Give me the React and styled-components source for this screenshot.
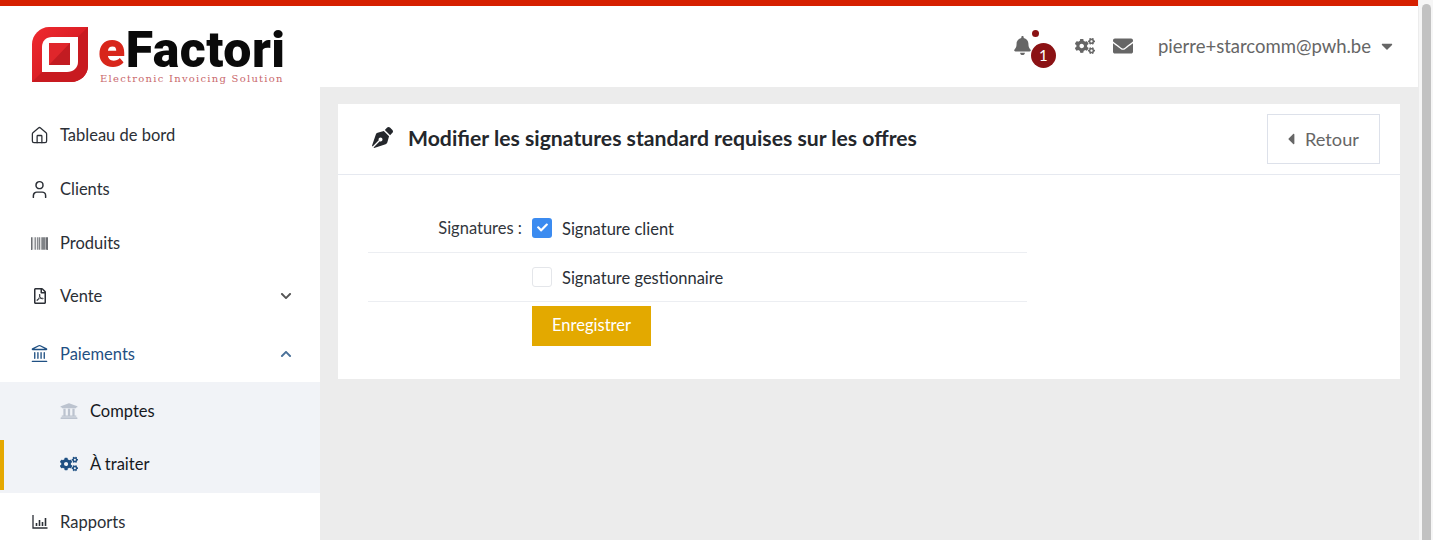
import React from 'react';
import styled, { createGlobalStyle } from 'styled-components';
import { FaBell, FaCogs, FaEnvelope, FaCaretDown, FaCaretLeft, FaPenNib, FaBarcode, FaRegFilePdf, FaUniversity, FaChevronDown, FaChevronUp, FaCheck } from 'react-icons/fa';
import { Home, User, Landmark } from 'lucide-react';

const GlobalStyle = createGlobalStyle`
  html, body {
    margin: 0;
    height: 100%;
    overflow: hidden;
    font-family: Lato, "Open Sans", sans-serif;
    color: #2b2f36;
  }
`;

const Shell = styled.div`
  display: flex;
  height: 540px;
  overflow: hidden;
`;

const Page = styled.div`
  flex: 1;
  display: flex;
  flex-direction: column;
  min-width: 0;
`;

const ScrollTrack = styled.div`
  width: 15px;
  box-sizing: border-box;
  padding: 4px 2px 0 3px;
  background: #f6f6f6;
  border-left: 1px solid #ececec;
`;

const ScrollThumb = styled.div`
  height: 536px;
  border-radius: 5px 5px 0 0;
  background: #c2c2c2;
`;

const Stripe = styled.div`
  height: 6px;
  background: #d62000;
`;

const Header = styled.header`
  height: 81px;
  display: flex;
  align-items: center;
  justify-content: space-between;
  padding: 0 22px 0 32px;
  background: #fff;
`;

const Logo = styled.div`
  display: flex;
  align-items: flex-start;
  gap: 10px;
  margin-top: 19px;
`;

const LogoText = styled.div`
  display: flex;
  flex-direction: column;
  width: 186px;
`;

const Wordmark = styled.div`
  font-family: Roboto, sans-serif;
  font-weight: 900;
  font-size: 50px;
  line-height: 46px;
  letter-spacing: 0.5px;
  color: #0a0a0a;
  white-space: nowrap;

  span {
    color: #d8261b;
  }
`;

const Tagline = styled.div`
  font-family: "DejaVu Serif", serif;
  font-size: 10px;
  line-height: 12px;
  letter-spacing: 1.25px;
  margin-left: 2px;
  color: #c9686c;
  white-space: nowrap;
`;

const Tools = styled.div`
  display: flex;
  align-items: center;
  color: #666;
  margin-top: -2px;
`;

const BellWrap = styled.div`
  position: relative;
  display: flex;
  font-size: 19px;
  margin-right: 43px;
`;

const Dot = styled.span`
  position: absolute;
  top: -6px;
  left: 19px;
  width: 7px;
  height: 7px;
  border-radius: 50%;
  background: #8b1214;
`;

const Count = styled.span`
  position: absolute;
  top: 7px;
  left: 18px;
  width: 25px;
  height: 25px;
  border-radius: 50%;
  background: #8b1214;
  color: #fff;
  font-size: 15px;
  line-height: 25px;
  text-align: center;
`;

const ToolIcon = styled.span`
  display: flex;
  font-size: 20px;
  margin-right: 18px;
`;

const UserName = styled.span`
  font-size: 18.5px;
  margin-left: 7px;
  color: #666;
`;

const Caret = styled.span`
  display: flex;
  font-size: 18px;
  margin-left: 7px;
`;

const Body = styled.div`
  flex: 1;
  display: flex;
  min-height: 0;
`;

const Sidebar = styled.nav`
  width: 320px;
  flex-shrink: 0;
  padding-top: 21px;
  background: #fff;
`;

const NavRow = styled.div`
  display: flex;
  align-items: center;
  box-sizing: border-box;
  height: ${p => p.$height || 54}px;
  padding: ${p => p.$pushDown || 0}px 28px 0 31px;
  font-size: 16.5px;
  color: ${p => (p.$open ? '#1f5083' : '#2b2f36')};
`;

const NavIcon = styled.span`
  width: 17px;
  margin-right: 12px;
  display: flex;
  justify-content: center;
  font-size: 17px;

  svg {
    flex-shrink: 0;
  }
`;

const NavLabel = styled.span`
  flex: 1;
`;

const Chevron = styled.span`
  display: flex;
  font-size: 12px;
  color: ${p => (p.$open ? '#4a7199' : '#555')};
`;

const SubMenu = styled.div`
  display: flex;
  flex-direction: column;
  gap: 5px;
  background: #f1f3f7;
  padding: 3px 0;
`;

const SubRow = styled.div`
  display: flex;
  align-items: center;
  box-sizing: border-box;
  height: 50px;
  padding-left: ${p => (p.$active ? 56 : 60)}px;
  padding-top: ${p => (p.$active ? 0 : 1)}px;
  padding-bottom: ${p => (p.$active ? 2 : 0)}px;
  border-left: ${p => (p.$active ? '4px solid #e5a800' : 'none')};
  font-size: 16.5px;
  color: #16191e;
`;

const SubIcon = styled.span`
  width: 18px;
  margin-right: 12px;
  display: flex;
  justify-content: center;
  font-size: 18px;
  color: ${p => p.$color};
`;

const Main = styled.main`
  flex: 1;
  min-width: 0;
  padding: 17px 18px;
  background: #ececec;
`;

const Card = styled.section`
  background: #fff;
  height: 275px;
`;

const CardHeader = styled.div`
  height: 71px;
  box-sizing: border-box;
  display: flex;
  align-items: center;
  padding: 0 20px 0 34px;
  border-bottom: 1px solid #e6e9f0;
`;

const TitleIcon = styled.span`
  display: flex;
  font-size: 21px;
  margin-bottom: 4px;
  color: #24272c;
`;

const CardTitle = styled.h1`
  flex: 1;
  margin: 0 0 3px 15px;
  font-size: 21.2px;
  font-weight: 700;
  color: #24272c;
`;

const BackButton = styled.button`
  display: flex;
  align-items: center;
  gap: 5px;
  width: 113px;
  height: 50px;
  box-sizing: border-box;
  border: 1px solid #dde1ea;
  background: #fff;
  padding: 0 0 0 14px;
  font-family: inherit;
  font-size: 18.2px;
  color: #666;
`;

const Form = styled.form`
  width: 659px;
  margin: 0 0 0 30px;
  padding-top: 29px;
`;

const FormRow = styled.div`
  display: flex;
  align-items: center;
  height: ${p => p.$height}px;
  box-sizing: border-box;
  padding-top: 1px;
  border-bottom: 1px solid #eceef2;
`;

const FieldLabel = styled.div`
  width: 154px;
  margin-right: 10px;
  text-align: right;
  font-size: 16.5px;
  color: #33373d;
  position: relative;
  top: -1px;
`;

const CheckBox = styled.span`
  width: 20px;
  height: 20px;
  box-sizing: border-box;
  margin: 0 10px 2px 0;
  display: flex;
  align-items: center;
  justify-content: center;
  border-radius: 3px;
  border: ${p => (p.$checked ? 'none' : '1px solid #e4e6ea')};
  background: ${p => (p.$checked ? '#3b8bf0' : '#fff')};
  color: #fff;
  font-size: 11px;
`;

const CheckText = styled.span`
  font-size: 16.5px;
  color: #2b2f36;
`;

const Actions = styled.div`
  padding: 4px 0 0 164px;
`;

const SaveButton = styled.button`
  width: 119px;
  height: 40px;
  border: none;
  background: #e3a900;
  color: #fff;
  padding: 0 0 2px;
  font-family: inherit;
  font-size: 16.5px;
`;

const LogoMark = () => (
  <svg width="56" height="56" viewBox="0 0 56 56">
    <defs>
      <linearGradient id="mark" x1="0" y1="0" x2="1" y2="1">
        <stop offset="0" stopColor="#ef2a2f" />
        <stop offset="1" stopColor="#c9141c" />
      </linearGradient>
    </defs>
    <path d="M17 0H56V39C56 48 48 55 39 55H0V17C0 8 8 0 17 0Z" fill="url(#mark)" />
    <path d="M56 0V39C56 48 48 55 39 55H0Z" fill="#c81a20" />
    <path d="M20 10H46V35C46 41 41 45 35 45H10V20C10 14 14 10 20 10Z" fill="#fff" />
    <path d="M17 16H38V38H17Z" fill="#e0262b" />
    <path d="M38 16V38H17Z" fill="#c21c22" />
  </svg>
);

const ReportIcon = () => (
  <svg width="16" height="14" viewBox="0 0 16 14" fill="none" stroke="currentColor">
    <path d="M1 0V13H15.5" strokeWidth="1.3" />
    <path d="M4.5 11V8M7.5 11V5M10.5 11V7M13.5 11V3" strokeWidth="1.6" />
  </svg>
);

const App = () => (
  <Shell>
    <GlobalStyle />
    <Page>
      <Stripe />
      <Header>
        <Logo>
          <LogoMark />
          <LogoText>
            <Wordmark><span>e</span>Factori</Wordmark>
            <Tagline>Electronic Invoicing Solution</Tagline>
          </LogoText>
        </Logo>
        <Tools>
          <BellWrap>
            <FaBell />
            <Dot />
            <Count>1</Count>
          </BellWrap>
          <ToolIcon><FaCogs /></ToolIcon>
          <ToolIcon><FaEnvelope /></ToolIcon>
          <UserName>pierre+starcomm@pwh.be</UserName>
          <Caret><FaCaretDown /></Caret>
        </Tools>
      </Header>
      <Body>
        <Sidebar>
          <NavRow>
            <NavIcon><Home size={19} strokeWidth={1.6} /></NavIcon>
            <NavLabel>Tableau de bord</NavLabel>
          </NavRow>
          <NavRow>
            <NavIcon><User size={21} strokeWidth={1.7} /></NavIcon>
            <NavLabel>Clients</NavLabel>
          </NavRow>
          <NavRow>
            <NavIcon><FaBarcode /></NavIcon>
            <NavLabel>Produits</NavLabel>
          </NavRow>
          <NavRow $height={52}>
            <NavIcon><FaRegFilePdf size={16} /></NavIcon>
            <NavLabel>Vente</NavLabel>
            <Chevron><FaChevronDown /></Chevron>
          </NavRow>
          <NavRow $open $height={60} $pushDown={3}>
            <NavIcon><Landmark size={19} strokeWidth={1.7} /></NavIcon>
            <NavLabel>Paiements</NavLabel>
            <Chevron $open><FaChevronUp /></Chevron>
          </NavRow>
          <SubMenu>
            <SubRow>
              <SubIcon $color="#bcc3cf"><FaUniversity /></SubIcon>
              Comptes
            </SubRow>
            <SubRow $active>
              <SubIcon $color="#1f5083"><FaCogs /></SubIcon>
              À traiter
            </SubRow>
          </SubMenu>
          <NavRow $height={56} $pushDown={2}>
            <NavIcon><ReportIcon /></NavIcon>
            <NavLabel>Rapports</NavLabel>
          </NavRow>
        </Sidebar>
        <Main>
          <Card>
            <CardHeader>
              <TitleIcon><FaPenNib /></TitleIcon>
              <CardTitle>Modifier les signatures standard requises sur les offres</CardTitle>
              <BackButton type="button"><FaCaretLeft size={18} />Retour</BackButton>
            </CardHeader>
            <Form>
              <FormRow $height={49}>
                <FieldLabel>Signatures :</FieldLabel>
                <CheckBox $checked><FaCheck /></CheckBox>
                <CheckText>Signature client</CheckText>
              </FormRow>
              <FormRow $height={49}>
                <FieldLabel />
                <CheckBox />
                <CheckText>Signature gestionnaire</CheckText>
              </FormRow>
              <Actions>
                <SaveButton type="button">Enregistrer</SaveButton>
              </Actions>
            </Form>
          </Card>
        </Main>
      </Body>
    </Page>
    <ScrollTrack><ScrollThumb /></ScrollTrack>
  </Shell>
);

export default App;
